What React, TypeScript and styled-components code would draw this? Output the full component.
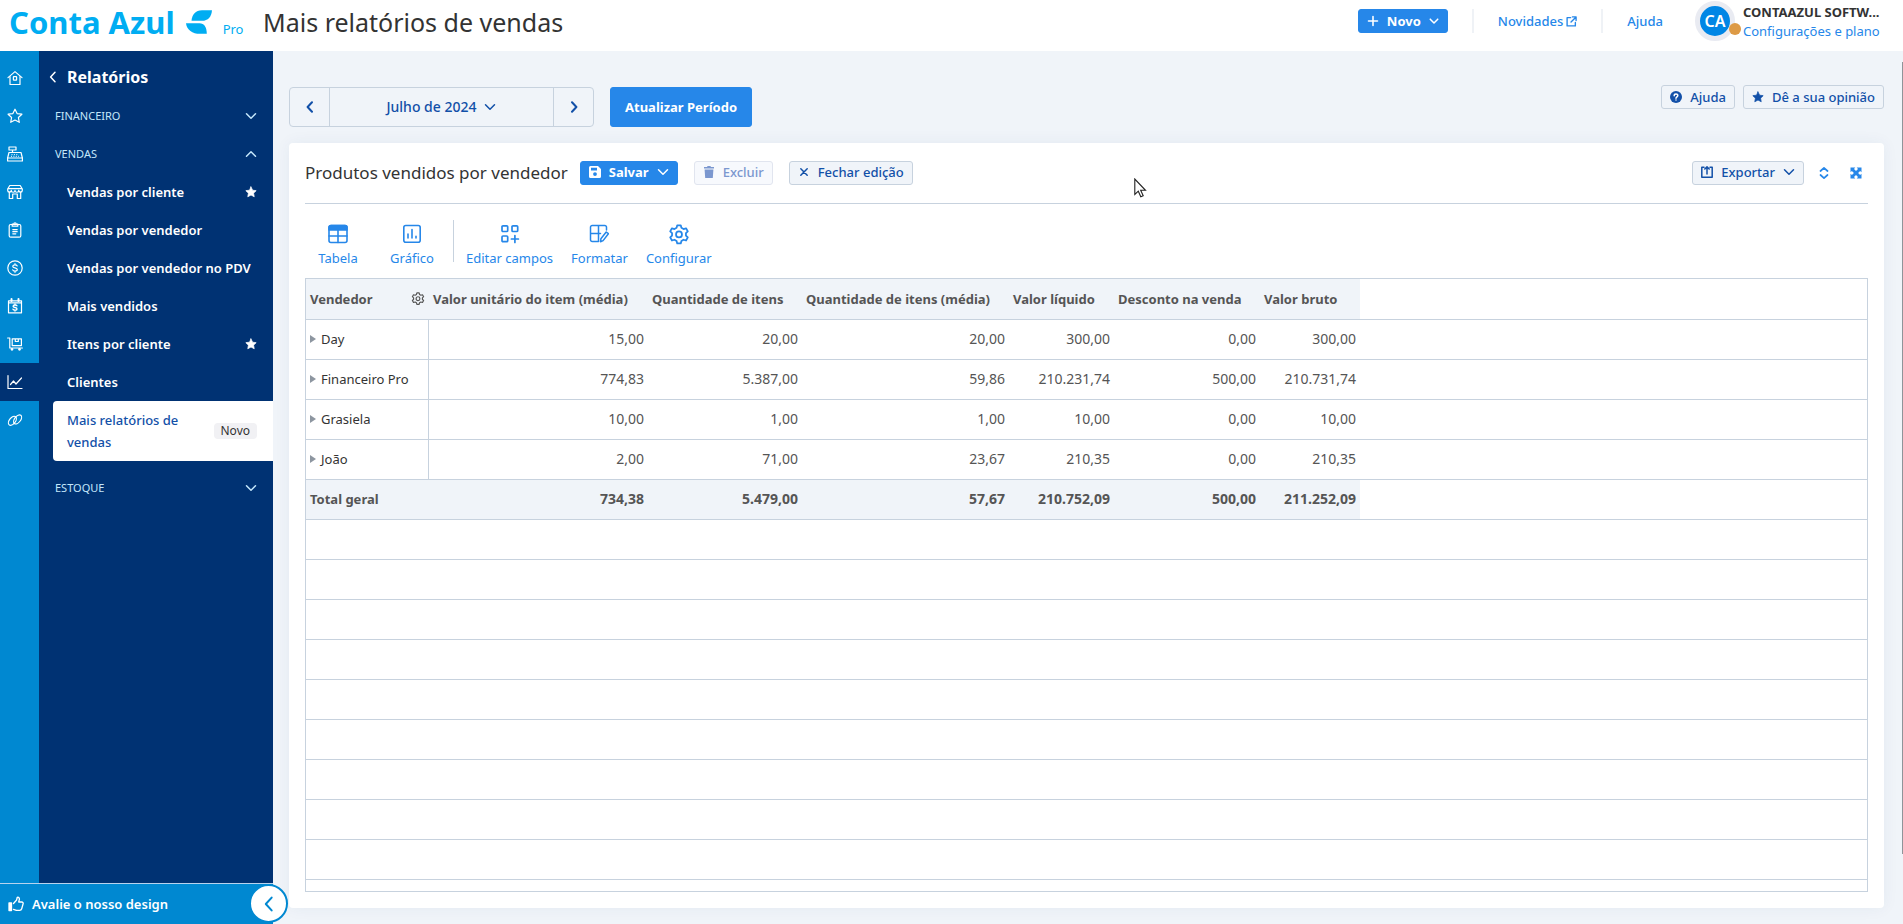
import React from 'react';
import styled, { createGlobalStyle } from 'styled-components';

const color = {
  brand: '#00adf2',
  action: '#2687e9',
  rail: '#0088d1',
  navy: '#003273',
  ink: '#1250a8',
  line: '#c7d2de',
  page: '#f0f4f9',
  text: '#333333',
  muted: '#555555',
};

const GlobalStyle = createGlobalStyle`
  * { box-sizing: border-box; }
  body { margin: 0; background: ${color.page}; font: 13px/20px "Noto Sans", sans-serif; color: ${color.text}; }
  button { font: inherit; color: inherit; background: none; border: 0; padding: 0; cursor: pointer; }
  a { color: inherit; text-decoration: none; }
  ul { list-style: none; margin: 0; padding: 0; }
  h1, h2 { margin: 0; font-weight: 400; }
  svg { display: block; flex: none; }
`;

/* ---------- icons ---------- */

type IconProps = { size?: number; children: React.ReactNode; weight?: number; box?: number };

const Icon = ({ size = 16, box = 16, weight = 1.3, children }: IconProps) => (
  <svg width={size} height={size} viewBox={`0 0 ${box} ${box}`} fill="none" stroke="currentColor"
    strokeWidth={weight} strokeLinecap="round" strokeLinejoin="round" aria-hidden="true">
    {children}
  </svg>
);

const starPath = 'M8 1.2l2.1 4.4 4.8.6-3.5 3.3.9 4.8L8 12l-4.3 2.3.9-4.8L1.1 6.2l4.8-.6z';

const ChevronDown = ({ weight = 1.5, size = 12 }) => <Icon size={size} box={12} weight={weight}><path d="M1.5 3.8L6 8.3l4.5-4.5" /></Icon>;
const ChevronUp = () => <Icon size={12} box={12} weight={1.5}><path d="M1.5 8.3L6 3.8l4.5 4.5" /></Icon>;
const ChevronLeft = ({ weight = 1.5, size = 12 }) => <Icon size={size} box={12} weight={weight}><path d="M8 1.2L3.6 6 8 10.8" /></Icon>;
const ChevronRight = ({ weight = 1.5, size = 12 }) => <Icon size={size} box={12} weight={weight}><path d="M4 1.2L8.4 6 4 10.8" /></Icon>;
const StarFilled = () => <Icon size={12} weight={1}><path d={starPath} fill="currentColor" /></Icon>;

const railIcons: { name: string; art: React.ReactNode; active?: boolean }[] = [
  { name: 'Início', art: <><path d="M1 7.6L8 1.6l7 6" /><path d="M3 6.5v8h10v-8" /><rect x="6.4" y="6.6" width="3.2" height="3.6" rx=".5" /></> },
  { name: 'Favoritos', art: <path d={starPath} /> },
  { name: 'Caixa', art: <><path d="M2 1h7v3H2zM5.5 4v2.5M2 6.5h12l1.4 5.5H.6z" /><path d="M.6 12v3h14.8v-3" /><path d="M4.5 8.6h7M4 10.3h8" strokeDasharray="1 1.4" strokeLinecap="butt" strokeWidth="1" /></> },
  { name: 'Loja', art: <><path d="M2.8 1.5h10.4L15.3 5v1.2a1.8 1.8 0 0 1-3.6.2 1.8 1.8 0 0 1-3.7 0 1.8 1.8 0 0 1-3.7 0A1.8 1.8 0 0 1 .7 6.2V5zM.8 4.6h14.4" /><path d="M2.3 8v6.5h3.4V10h4.6v4.5h3.4V8" /></> },
  { name: 'Pedidos', art: <><rect x="2.2" y="2.5" width="11.6" height="12.7" rx="1.5" /><path d="M5.2 4.2V2h1.6A1.2 1.2 0 0 1 8 .8 1.2 1.2 0 0 1 9.2 2h1.6v2.2zM5.8 7.6h4.4M5.8 9.7h4.4M5.8 11.8h3" /></> },
  { name: 'Financeiro', art: <><circle cx="8" cy="8" r="7.2" /><path d="M10.2 5.9C9.8 5 9 4.9 8 4.900c-1.300 0-2.200.5-2.200 1.500C5.800 8.400 10.300 7.400 10.300 9.600c0 1-1 1.500-2.300 1.500-1.100 0-2-.3-2.300-1.200M8 3.700v1.200M8 11.100v1.200" /></> },
  { name: 'Calendário', art: <><path d="M1.500 2.800h13v12h-13zM1.500 4.800h13" /><path d="M4.500 1v2M11.500 1v2" strokeWidth="2" /><path d="M9.900 7.800C9.600 7.200 8.900 7 8 7c-1.100 0-1.900.4-1.900 1.200 0 1.700 3.900.9 3.900 2.700 0 .8-.9 1.200-2 1.200-1 0-1.700-.2-2-.9M8 6v1M8 12.100v1" strokeWidth="1.400" /></> },
  { name: 'Estoque', art: <><path d="M.6 2h2.200v10h12.600M5.200 2.800h9.200v6.800H5.200zM8.300 2.800v2.700h3V2.800" /><circle cx="5" cy="13.300" r=".8" fill="currentColor" /><circle cx="12.500" cy="13.300" r=".8" fill="currentColor" /></> },
  { name: 'Relatórios', art: <path d="M1 1.500v13h14M3.500 10.500l3-3.500 2.500 3 5.500-6" />, active: true },
  { name: 'Integrações', art: <><ellipse cx="5.400" cy="8.800" rx="3" ry="5.200" transform="rotate(38 5.400 8.800)" /><ellipse cx="10.600" cy="7.400" rx="3" ry="5.200" transform="rotate(38 10.600 7.400)" /></> },
];

const gearPath = 'M8.400 1.200h3.200l.6 2.300 1.900 1.100 2.300-.7 1.600 2.800-1.700 1.600v2.200l1.700 1.700-1.600 2.800-2.300-.7-1.900 1.100-.6 2.300H8.400l-.6-2.300-1.900-1.100-2.300.7L2 12.200l1.700-1.700V8.300L2 6.700l1.600-2.800 2.300.7 1.900-1.100z';

const GearIcon = ({ size = 22, weight = 1.6 }) => (
  <Icon size={size} box={20} weight={weight}><path d={gearPath} /><circle cx="10" cy="9.500" r="2.700" /></Icon>
);

const tools = {
  table: <Icon size={20} box={20} weight={1.6}><rect x="1" y="1.500" width="18" height="17" rx="2" /><path d="M1 3.500a2 2 0 0 1 2-2h14a2 2 0 0 1 2 2V6H1z" fill="currentColor" /><path d="M1 12h18M10 6v12.500" /></Icon>,
  chart: <Icon size={20} box={20} weight={1.6}><rect x="1.800" y="1.500" width="16.400" height="16.800" rx="2" /><path d="M6 10v4M10 5.500V14M14 12.300V14" /></Icon>,
  fields: <Icon size={20} box={20} weight={1.7}><rect x="2" y="1.800" width="5.700" height="5.700" rx="1" /><rect x="12" y="1.800" width="5.700" height="5.700" rx="1" /><rect x="2" y="12" width="5.700" height="5.700" rx="1" /><path d="M14.900 11.500v7M11.400 15h7" /></Icon>,
  format: <Icon size={20} box={20} weight={1.5}><path d="M9 17.500H3.200a1.700 1.700 0 0 1-1.700-1.700V3.200a1.700 1.700 0 0 1 1.700-1.700h12.600a1.700 1.700 0 0 1 1.700 1.700V6M1.500 9.500h10M9.500 1.500v16M11.500 17.800l.4-3L17.200 8l2.200 1.700-5.300 6.900z" /></Icon>,
  config: <GearIcon />,
};

/* ---------- header ---------- */

const Shell = styled.div`display: flex; flex-direction: column; height: 100vh; position: relative;`;

const Header = styled.header`
  display: flex; align-items: flex-start; height: 51px; flex: none;
  padding-left: 9px; padding-right: 19px; background: #fff;
`;
const Brand = styled.a`display: flex; align-items: flex-start; color: ${color.brand}; width: 254px; gap: 11px;`;
const BrandName = styled.span`font-size: 31px; line-height: 44px; font-weight: 700; white-space: nowrap;`;
const BrandLeaf = styled.svg`margin-top: 10px;`;
const BrandPlan = styled.span`font-size: 13px; line-height: 20px; padding-top: 19px;`;
const PageTitle = styled.h1`font-size: 25px; line-height: 44px; flex: 1; white-space: nowrap;`;

const HeaderActions = styled.div`display: flex; align-items: center; height: 42px; color: ${color.action};`;
const Divider = styled.span`width: 2px; height: 24px; background: #eff2f6; margin: 0 24px;`;
const HeaderLink = styled.a`display: flex; align-items: center; gap: 3px; font-weight: 500;`;
const Account = styled.div`display: flex; align-items: center; gap: 8px; margin-left: 32px;`;
const Avatar = styled.span`
  position: relative; width: 40px; height: 40px; border-radius: 50%; border: 5px solid #e9ebf2;
  background: #0086e5; color: #fff; font-size: 16px; line-height: 30px; font-weight: 600; text-align: center;
`;
const StatusDot = styled.span`
  position: absolute; right: -11px; bottom: 1px; width: 12px; height: 12px; border-radius: 50%; background: #dd9a45;
`;
const AccountText = styled.div`
  display: flex; flex-direction: column; width: 141px; padding-top: 2px; line-height: 19px; white-space: nowrap;
`;
const AccountName = styled.strong`overflow: hidden; text-overflow: ellipsis; color: ${color.text};`;

/* ---------- buttons ---------- */

const Button = styled.button<{ $kind?: 'primary' | 'ghost'; $large?: boolean }>`
  display: inline-flex; align-items: center; justify-content: center; gap: 8px;
  height: ${p => (p.$large ? 40 : 24)}px; padding: 0 ${p => (p.$large ? 14 : 8)}px 1px; border-radius: 3px; white-space: nowrap;
  font-weight: ${p => (p.$kind === 'primary' ? 700 : 500)};
  color: ${p => (p.$kind === 'primary' ? '#fff' : color.ink)};
  background: ${p => (p.$kind === 'primary' ? color.action : color.page)};
  border: 1px solid ${p => (p.$kind === 'primary' ? color.action : color.line)};
  &:disabled { color: #7b97cf; background: #f7f9fd; border-color: #e1e5ef; cursor: default; }
`;
const IconButton = styled.button`display: grid; place-items: center; width: 24px; height: 24px; color: ${color.action};`;

/* ---------- sidebar ---------- */

const Body = styled.div`display: flex; flex: 1; min-height: 0;`;
const Sidebar = styled.aside`display: flex; flex-direction: column; width: 273px; flex: none; position: relative;`;
const SidebarTop = styled.div`display: flex; flex: 1; min-height: 0;`;
const Rail = styled.nav`width: 39px; flex: none; padding-top: 8px; background: ${color.rail};`;
const RailLink = styled.a<{ $active?: boolean }>`
  display: flex; align-items: center; height: 38px; padding-left: 7px; color: #fff;
  background: ${p => (p.$active ? color.navy : 'transparent')};
`;
const Menu = styled.nav`flex: 1; padding: 8px 0 0 14px; background: ${color.navy}; color: #fff;`;
const MenuTitle = styled.button`
  display: flex; align-items: center; gap: 8px; height: 38px; padding-bottom: 2px; font-size: 16px; font-weight: 700; margin-left: -6px;
`;
const Section = styled.button`
  display: flex; align-items: center; justify-content: space-between; width: 100%; height: 38px;
  padding: 0 16px 0 2px; font-size: 11px; color: #c4e7fb;
`;
const Report = styled.a`
  display: flex; align-items: center; justify-content: space-between; height: 38px;
  padding: 0 16px 1px 14px; font-weight: 600; white-space: nowrap;
`;
const CurrentReport = styled.a`
  display: flex; align-items: center; justify-content: space-between; margin-bottom: 8px;
  padding: 8px 16px 8px 14px; border-radius: 4px 0 0 4px; background: #fff; color: ${color.ink}; line-height: 22px; font-weight: 500;
`;
const CurrentLabel = styled.span`max-width: 124px;`;
const Badge = styled.span`
  padding: 0 7px; border-radius: 4px; background: #f1f1f4; color: ${color.text}; font-size: 12px; line-height: 16px; font-weight: 400;
`;
const Feedback = styled.div`
  display: flex; align-items: center; height: 41px; flex: none; padding-left: 8px;
  background: ${color.rail}; border-top: 1px solid #b8d3ee; color: #fff;
`;
const FeedbackLink = styled.a`display: flex; align-items: center; gap: 8px; font-weight: 600;`;
const CollapseButton = styled.button`
  position: absolute; right: -15px; bottom: 1px; width: 39px; height: 39px; z-index: 2;
  display: grid; place-items: center; border-radius: 50%; border: 2px solid ${color.rail}; background: #fff; color: ${color.rail};
`;

/* ---------- main ---------- */

const Main = styled.main`
  display: flex; flex-direction: column; flex: 1; min-width: 0; padding: 36px 19px 16px 16px;
`;
const ScrollThumb = styled.span`position: absolute; right: 0; top: 62px; bottom: 70px; width: 1px; background: #8f9499;`;
const FilterBar = styled.div`display: flex; align-items: center; gap: 16px; margin-bottom: 16px; height: 40px; flex: none;`;
const Period = styled.div`
  display: flex; height: 40px; border: 1px solid ${color.line}; border-radius: 4px; color: ${color.ink};
`;
const PeriodStep = styled.button`display: grid; place-items: center; width: 39px;`;
const PeriodLabel = styled.button`
  display: flex; align-items: center; justify-content: center; gap: 8px; width: 225px; font-size: 14px; font-weight: 500;
  border-left: 1px solid ${color.line}; border-right: 1px solid ${color.line};
`;
const HelpGroup = styled.div`display: flex; align-items: center; gap: 8px; height: 20px; margin-left: auto; align-self: flex-start;`;

const Card = styled.section`
  display: flex; flex-direction: column; flex: 1; min-height: 0; padding: 0 16px 16px;
  background: #fff; border-radius: 4px; box-shadow: 0 0 16px rgba(40, 70, 120, 0.06);
`;
const CardHeader = styled.div`
  display: flex; align-items: center; gap: 12px; height: 61px; flex: none; border-bottom: 1px solid ${color.line};
  padding-bottom: 1px;
`;
const CardTitle = styled.h2`font-size: 17px; line-height: 24px; white-space: nowrap;`;
const CardActions = styled.div`display: flex; gap: 16px;`;
const CardTools = styled.div`display: flex; gap: 8px; margin-left: auto;`;

const Toolbar = styled.div`display: flex; padding: 16px 0 12px; flex: none; color: ${color.action};`;
const Tool = styled.button<{ $wide?: boolean }>`
  display: flex; flex-direction: column; align-items: center; gap: 6px; padding: 4px 9px 0; line-height: 16px;
  min-width: ${p => (p.$wide ? 66 : 0)}px; margin-right: ${p => (p.$wide ? 8 : 0)}px;
`;
const ToolGlyph = styled.span`display: grid; place-items: center; height: 20px;`;
const ToolDivider = styled.span`width: 1px; height: 42px; margin-right: 3px; background: ${color.line};`;

const GridFrame = styled.div`flex: 1; min-height: 0; overflow: hidden; border: 1px solid ${color.line};`;
const Grid = styled.table`
  width: 100%; table-layout: fixed; border-collapse: separate; border-spacing: 0; color: ${color.muted}; white-space: nowrap;
`;
const Row = styled.tr<{ $shaded?: boolean }>`
  height: 40px;
  font-weight: ${p => (p.$shaded ? 700 : 400)};
  & > *:not(:last-child) { background: ${p => (p.$shaded ? color.page : 'transparent')}; }
`;
const HeadRow = styled(Row)`height: 41px;`;
const HeadCell = styled.th`padding: 0 4px 1px; text-align: left; font-weight: 700; border-bottom: 1px solid ${color.line};`;
const HeadLabel = styled.div`display: flex; align-items: center; justify-content: space-between;`;
const NameCell = styled.th<{ $ruled?: boolean }>`
  padding: 0 4px 1px; text-align: left; font-weight: inherit; color: ${p => (p.$ruled ? color.text : 'inherit')};
  border-bottom: 1px solid ${color.line}; border-right: ${p => (p.$ruled ? `1px solid ${color.line}` : '0')};
`;
const Expander = styled.button`
  display: flex; align-items: center; gap: 5px;
  &::before { content: ''; border: solid transparent; border-width: 4px 0 4px 6px; border-left-color: #8d96a0; }
`;
const ValueCell = styled.td`padding: 0 4px 1px; text-align: right; font-size: 14px; border-bottom: 1px solid ${color.line};`;

const Pointer = styled.svg`position: absolute; left: 1134px; top: 178px; pointer-events: none;`;

const columns = [
  ['Valor unitário do item (média)', 219],
  ['Quantidade de itens', 154],
  ['Quantidade de itens (média)', 207],
  ['Valor líquido', 105],
  ['Desconto na venda', 146],
  ['Valor bruto', 100],
] as const;

const sellers = [
  ['Day', '15,00', '20,00', '20,00', '300,00', '0,00', '300,00'],
  ['Financeiro Pro', '774,83', '5.387,00', '59,86', '210.231,74', '500,00', '210.731,74'],
  ['Grasiela', '10,00', '1,00', '1,00', '10,00', '0,00', '10,00'],
  ['João', '2,00', '71,00', '23,67', '210,35', '0,00', '210,35'],
];
const totals = ['734,38', '5.479,00', '57,67', '210.752,09', '500,00', '211.252,09'];
const emptyRows = Array.from({ length: 30 }, (_, i) => i);

const reports = [
  ['Vendas por cliente', true],
  ['Vendas por vendedor', false],
  ['Vendas por vendedor no PDV', false],
  ['Mais vendidos', false],
  ['Itens por cliente', true],
  ['Clientes', false],
] as const;

function TopBar() {
  return (
    <Header>
      <Brand href="#">
        <BrandName>Conta Azul</BrandName>
        <BrandLeaf width="26" height="24" viewBox="0 0 26 24" fill="currentColor" aria-hidden="true">
          <path d="M5.500 10.800C6 4.500 9.500.2 16 .2h10c-.4 6.400-4 10.600-10 10.600z" />
          <path d="M0 13.200h13.500c4.700 0 7.200 3.800 7.300 10.600H14C6.300 23.800.8 20 0 13.200z" />
        </BrandLeaf>
        <BrandPlan>Pro</BrandPlan>
      </Brand>
      <PageTitle>Mais relatórios de vendas</PageTitle>
      <HeaderActions>
        <Button $kind="primary">
          <Icon size={12} box={12} weight={1.6}><path d="M6 1.500v9M1.500 6h9" /></Icon>Novo<ChevronDown size={10} weight={1.8} />
        </Button>
        <Divider />
        <HeaderLink href="#">
          Novidades
          <Icon size={11} box={12} weight={1.5}><path d="M5 1.800H1.200v9h9V7M7 1h4v4M11 1L5.500 6.500" /></Icon>
        </HeaderLink>
        <Divider />
        <HeaderLink href="#">Ajuda</HeaderLink>
        <Account>
          <Avatar>CA<StatusDot /></Avatar>
          <AccountText>
            <AccountName>CONTAAZUL SOFTW...</AccountName>
            <a href="#">Configurações e plano</a>
          </AccountText>
        </Account>
      </HeaderActions>
    </Header>
  );
}

function SideNav() {
  return (
    <Sidebar>
      <SidebarTop>
        <Rail aria-label="Principal">
          {railIcons.map(i => (
            <RailLink key={i.name} href="#" aria-label={i.name} $active={i.active}><Icon weight={1.2}>{i.art}</Icon></RailLink>
          ))}
        </Rail>
        <Menu aria-label="Relatórios">
          <MenuTitle><ChevronLeft />Relatórios</MenuTitle>
          <Section>FINANCEIRO<ChevronDown /></Section>
          <Section>VENDAS<ChevronUp /></Section>
          <ul>
            {reports.map(([name, starred]) => (
              <li key={name}><Report href="#">{name}{starred && <StarFilled />}</Report></li>
            ))}
            <li>
              <CurrentReport href="#" aria-current="page">
                <CurrentLabel>Mais relatórios de vendas</CurrentLabel><Badge>Novo</Badge>
              </CurrentReport>
            </li>
          </ul>
          <Section>ESTOQUE<ChevronDown /></Section>
        </Menu>
      </SidebarTop>
      <Feedback>
        <FeedbackLink href="#">
          <Icon weight={1.3}><path d="M1 7h2.500v7.500H1z" fill="currentColor" /><path d="M5.500 7.500L8.600 4l.6-2.700c1.800-.3 2.500 1 2.100 2.400L10.700 6h3c1.200 0 1.700.8 1.400 1.800l-1.400 5c-.3 1-1 1.500-2 1.500H8.400l-2.900-1" /></Icon>
          Avalie o nosso design
        </FeedbackLink>
        <CollapseButton aria-label="Recolher menu"><ChevronLeft size={16} /></CollapseButton>
      </Feedback>
    </Sidebar>
  );
}

function Filters() {
  return (
    <FilterBar>
      <Period>
        <PeriodStep aria-label="Mês anterior"><ChevronLeft weight={2} /></PeriodStep>
        <PeriodLabel>Julho de 2024<ChevronDown /></PeriodLabel>
        <PeriodStep aria-label="Próximo mês"><ChevronRight weight={2} /></PeriodStep>
      </Period>
      <Button $kind="primary" $large>Atualizar Período</Button>
      <HelpGroup>
        <Button>
          <Icon size={12} box={12} weight={0}><circle cx="6" cy="6" r="6" fill="currentColor" /><path d="M4.200 4.700c0-2.300 3.700-2.200 3.600-.1C7.800 5.800 6 5.800 6 7.200M6 9v.1" stroke="#fff" strokeWidth="1.500" /></Icon>
          Ajuda
        </Button>
        <Button><StarFilled />Dê a sua opinião</Button>
      </HelpGroup>
    </FilterBar>
  );
}

function SalesGrid() {
  return (
    <GridFrame>
      <Grid>
        <colgroup>
          <col width="123" />
          {columns.map(([name, width]) => <col key={name} width={width} />)}
          <col />
        </colgroup>
        <thead>
          <HeadRow $shaded>
            <HeadCell scope="col"><HeadLabel>Vendedor<GearIcon size={14} weight={1.7} /></HeadLabel></HeadCell>
            {columns.map(([name]) => <HeadCell key={name} scope="col">{name}</HeadCell>)}
            <HeadCell as="td" />
          </HeadRow>
        </thead>
        <tbody>
          {sellers.map(([name, ...values]) => (
            <Row key={name}>
              <NameCell scope="row" $ruled><Expander>{name}</Expander></NameCell>
              {values.map((v, i) => <ValueCell key={i}>{v}</ValueCell>)}
              <ValueCell />
            </Row>
          ))}
          <Row $shaded>
            <NameCell scope="row">Total geral</NameCell>
            {totals.map((v, i) => <ValueCell key={i}>{v}</ValueCell>)}
            <ValueCell />
          </Row>
          {emptyRows.map(i => <Row key={i} aria-hidden="true"><ValueCell colSpan={8} /></Row>)}
        </tbody>
      </Grid>
    </GridFrame>
  );
}

function ReportCard() {
  return (
    <Card>
      <CardHeader>
        <CardTitle>Produtos vendidos por vendedor</CardTitle>
        <CardActions>
          <Button $kind="primary">
            <Icon size={12} box={12} weight={0}><path fillRule="evenodd" fill="currentColor" d="M1.500 0H9l3 3v7.500a1.500 1.500 0 0 1-1.500 1.500h-9A1.500 1.500 0 0 1 0 10.500v-9A1.500 1.500 0 0 1 1.500 0zM2 1.800v2.700h6V1.800zM6 6.200a1.900 1.900 0 1 0 0 3.800 1.900 1.900 0 0 0 0-3.800z" /></Icon>
            Salvar<ChevronDown />
          </Button>
          <Button disabled>
            <Icon size={12} box={12} weight={0}><path fill="currentColor" d="M1 1h3l.6-1h2.800L8 1h3v1.500H1zM1.600 3.500h8.800L9.800 12H2.200z" /></Icon>
            Excluir
          </Button>
          <Button><Icon size={12} box={12} weight={1.5}><path d="M2.800 2.800l6.400 6.400M9.200 2.800l-6.400 6.400" /></Icon>Fechar edição</Button>
        </CardActions>
        <CardTools>
          <Button>
            <Icon size={12} box={12} weight={1.5}><path d="M3 1.200H.8v10h10.400v-10H9M6 8V1.200M3.800 3L6 .9 8.200 3" /></Icon>
            Exportar<ChevronDown />
          </Button>
          <IconButton aria-label="Expandir linhas"><Icon size={12} box={12} weight={1.7}><path d="M2.500 4L6 .9 9.500 4M2.500 8L6 11.100 9.500 8" /></Icon></IconButton>
          <IconButton aria-label="Tela cheia">
            <Icon size={12} box={12} weight={0}><path fill="currentColor" d="M.5.500h4.800L4 1.900l2 2 2-2L6.700.5h4.800v4.800L10.100 4l-2 2 2 2 1.400-1.300v4.800H6.700L8 10.100l-2-2-2 2 1.300 1.400H.5V6.700L1.900 8l2-2-2-2L.5 5.300z" /></Icon>
          </IconButton>
        </CardTools>
      </CardHeader>
      <Toolbar>
        <Tool $wide><ToolGlyph>{tools.table}</ToolGlyph>Tabela</Tool>
        <Tool $wide><ToolGlyph>{tools.chart}</ToolGlyph>Gráfico</Tool>
        <ToolDivider />
        <Tool><ToolGlyph>{tools.fields}</ToolGlyph>Editar campos</Tool>
        <Tool><ToolGlyph>{tools.format}</ToolGlyph>Formatar</Tool>
        <Tool><ToolGlyph>{tools.config}</ToolGlyph>Configurar</Tool>
      </Toolbar>
      <SalesGrid />
    </Card>
  );
}

export default function App() {
  return (
    <Shell>
      <GlobalStyle />
      <TopBar />
      <Body>
        <SideNav />
        <Main>
          <Filters />
          <ReportCard />
        </Main>
      </Body>
      <ScrollThumb />
      <Pointer width="13" height="20" viewBox="0 0 13 20" aria-hidden="true">
        <path d="M.8 1v15.500l3.500-3.300 2.500 5.600 2.400-1.100-2.500-5.400h4.800z" fill="#fff" stroke="#222" strokeWidth="1.100" />
      </Pointer>
    </Shell>
  );
}
